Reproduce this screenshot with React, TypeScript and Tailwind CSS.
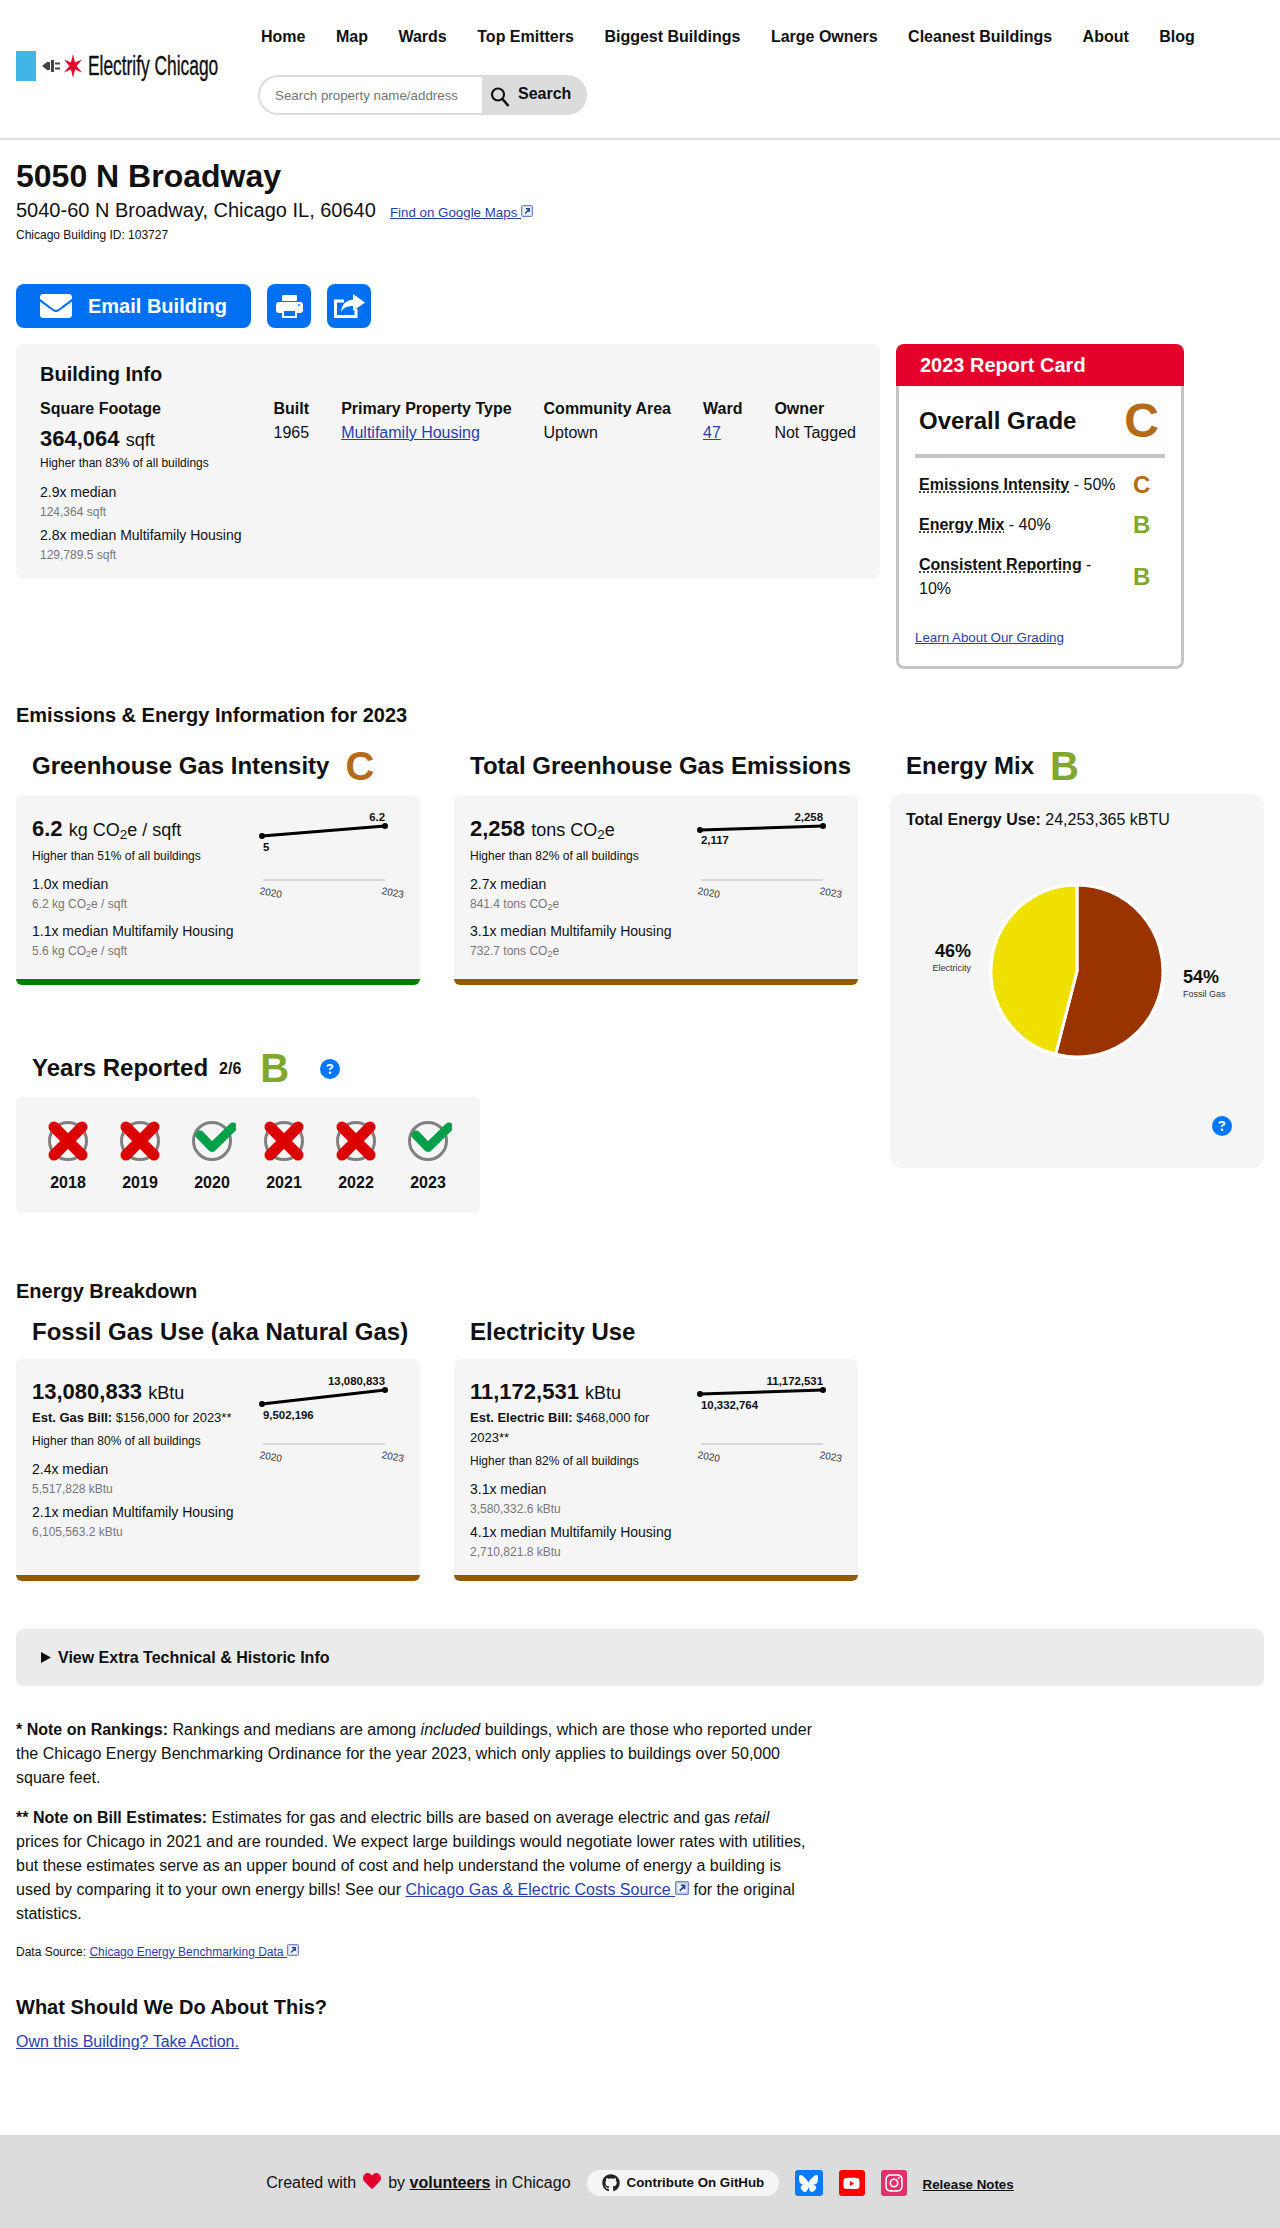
import React from 'react';
import { FaEnvelope, FaGithub, FaYoutube, FaInstagram, FaHeart } from 'react-icons/fa';
import { FaBluesky, FaCircleQuestion } from 'react-icons/fa6';

const navLinks = ['Home', 'Map', 'Wards', 'Top Emitters', 'Biggest Buildings', 'Large Owners', 'Cleanest Buildings', 'About', 'Blog'];

function ExtIcon({ size = 12 }: { size?: number }) {
  return (
    <svg width={size} height={size} viewBox="0 0 12 12" className="inline-block align-baseline">
      <rect x="0.5" y="0.5" width="11" height="11" rx="1" fill="#c9d4f0" stroke="#6f86c9" />
      <rect x="2.5" y="2.5" width="7" height="7" fill="#fff" />
      <path d="M4 8.5 L7.5 5 M5 3.8 H8.2 V7" stroke="#1f3a8a" strokeWidth="1.4" fill="none" />
    </svg>
  );
}

function Logo() {
  return (
    <div className="flex items-center w-[242px] h-[30px]">
      <div className="w-5 h-[30px] bg-[#41b6e6] shrink-0" />
      <svg width="18" height="14" viewBox="0 0 18 14" className="ml-[6px] shrink-0">
        <path d="M0 7 L5 3 H8 V11 H5 Z" fill="#444" />
        <rect x="9" y="1" width="3" height="12" fill="#444" />
        <rect x="13" y="3.5" width="5" height="2" fill="#444" />
        <rect x="13" y="8.5" width="5" height="2" fill="#444" />
      </svg>
      <svg width="18" height="24" viewBox="-9 -12 18 24" className="ml-[4px] shrink-0">
        <path
          d="M0 -12 L2 -3.5 L9 -6.5 L3.6 0 L9 6.5 L2 3.5 L0 12 L-2 3.5 L-9 6.5 L-3.6 0 L-9 -6.5 L-2 -3.5 Z"
          fill="#e4002b"
        />
      </svg>
      <span className="ml-[6px] shrink-0 text-[28px] leading-[30px] whitespace-nowrap text-[#111] origin-left scale-x-[0.62] [-webkit-text-stroke:0.4px_#111]">
        Electrify Chicago
      </span>
    </div>
  );
}

function Header() {
  return (
    <header className="h-[140px] border-b-2 border-[#ddd] flex px-4">
      <div className="mt-[51px]">
        <Logo />
      </div>
      <div>
        <nav className="flex gap-[30.5px] pl-[3px] mt-[25px] h-6 items-center">
          {navLinks.map((link) => (
            <a key={link} className="text-base font-bold text-[#111] whitespace-nowrap">
              {link}
            </a>
          ))}
        </nav>
        <div className="flex h-10 mt-[26px] w-[329px]">
          <input
            placeholder="Search property name/address"
            className="w-[224px] h-10 rounded-l-full border-2 border-r-0 border-[#ddd] pl-[15px] text-[13.33px] placeholder:text-[#757575] bg-white"
          />
          <button className="w-[105px] h-10 rounded-r-full bg-[#dcdcdc] flex items-center pl-2 font-bold text-base text-[#111]">
            <svg width="20" height="22" viewBox="0 0 20 22" className="mt-[3px]">
              <circle cx="8" cy="8.5" r="6" stroke="#111" strokeWidth="2.2" fill="none" />
              <path d="M12.5 13 L18.5 20" stroke="#111" strokeWidth="2.6" />
            </svg>
            <span className="ml-2 -mt-[2px]">Search</span>
          </button>
        </div>
      </div>
    </header>
  );
}

function Dotted({ children }: { children: React.ReactNode }) {
  return <span className="font-bold underline decoration-dotted underline-offset-2">{children}</span>;
}

function ReportCard() {
  return (
    <div className="w-[288px]">
      <div className="h-[42px] bg-[#e4002b] rounded-t-lg pl-6 text-white font-bold text-xl leading-[42px]">2023 Report Card</div>
      <div className="border-[3px] border-t-0 border-[#c4c4c4] rounded-b-lg px-4 pb-[18px]">
        <div className="h-[68px] flex items-center justify-between pl-1 pr-[6px] pt-[2px]">
          <span className="text-2xl font-bold text-[#111]">Overall Grade</span>
          <span className="text-5xl font-bold text-[#b36b17]">C</span>
        </div>
        <div className="h-1 bg-[#c4c4c4]" />
        <div className="mt-[15px] flex items-center pl-1 leading-6">
          <div className="w-[200px]">
            <Dotted>Emissions Intensity</Dotted> - 50%
          </div>
          <div className="ml-[14px] text-2xl leading-6 font-bold text-[#b36b17]">C</div>
        </div>
        <div className="mt-4 flex items-center pl-1 leading-6">
          <div className="w-[200px]">
            <Dotted>Energy Mix</Dotted> - 40%
          </div>
          <div className="ml-[14px] text-2xl leading-6 font-bold text-[#80a82e]">B</div>
        </div>
        <div className="mt-4 flex items-center pl-1 leading-6">
          <div className="w-[200px]">
            <Dotted>Consistent Reporting</Dotted> - 10%
          </div>
          <div className="ml-[14px] text-2xl leading-6 font-bold text-[#80a82e]">B</div>
        </div>
        <a className="block mt-[27px] text-[13.33px] leading-5 text-[#2a3eb1] underline">Learn About Our Grading</a>
      </div>
    </div>
  );
}

function BuildingInfo() {
  return (
    <div className="w-[864px] h-[235px] bg-[#f5f5f5] rounded-lg pl-6 pt-4">
      <h2 className="text-xl font-bold leading-7 text-[#111]">Building Info</h2>
      <div className="flex gap-8 mt-[9px] leading-6">
        <div>
          <div className="font-bold">Square Footage</div>
          <div className="mt-[2px] text-[22px] font-bold leading-8 whitespace-nowrap">
            364,064 <span className="text-lg leading-none font-normal">sqft</span>
          </div>
          <div className="text-xs leading-4">Higher than 83% of all buildings</div>
          <div className="mt-[11px] text-sm leading-5">2.9x median</div>
          <div className="mt-[2px] text-xs leading-4 text-[#777]">124,364 sqft</div>
          <div className="mt-[5px] text-sm leading-5">2.8x median Multifamily Housing</div>
          <div className="mt-[2px] text-xs leading-4 text-[#777]">129,789.5 sqft</div>
        </div>
        <div>
          <div className="font-bold">Built</div>
          <div>1965</div>
        </div>
        <div>
          <div className="font-bold">Primary Property Type</div>
          <a className="text-[#2a3eb1] underline">Multifamily Housing</a>
        </div>
        <div>
          <div className="font-bold">Community Area</div>
          <div>Uptown</div>
        </div>
        <div>
          <div className="font-bold">Ward</div>
          <a className="text-[#2a3eb1] underline">47</a>
        </div>
        <div>
          <div className="font-bold">Owner</div>
          <div>Not Tagged</div>
        </div>
      </div>
    </div>
  );
}

interface SparkProps {
  y1: number;
  y2: number;
  from: string;
  to: string;
  fromY: number;
  axisY: number;
}

function Spark({ y1, y2, from, to, fromY, axisY }: SparkProps) {
  return (
    <svg width="170" height="130" className="ml-1 shrink-0">
      <line x1="16" y1={y1} x2="139" y2={y2} stroke="#000" strokeWidth="3" />
      <circle cx="16" cy={y1} r="3" fill="#000" />
      <circle cx="139" cy={y2} r="3" fill="#000" />
      <text x="139" y={y2 - 5} textAnchor="end" fontSize="11.4" fontWeight="700" fill="#111">
        {to}
      </text>
      <text x="17" y={fromY} fontSize="11.4" fontWeight="700" fill="#111">
        {from}
      </text>
      <line x1="17" y1={axisY} x2="139" y2={axisY} stroke="#ccc" strokeWidth="1.5" />
      <text x="25" y={axisY + 16} textAnchor="middle" fontSize="10" fill="#333" transform={`rotate(10 25 ${axisY + 12})`}>
        2020
      </text>
      <text x="147" y={axisY + 16} textAnchor="middle" fontSize="10" fill="#333" transform={`rotate(10 147 ${axisY + 12})`}>
        2023
      </text>
    </svg>
  );
}

function CO2() {
  return (
    <>
      CO<sub>2</sub>e
    </>
  );
}

function Stat({ big, sub }: { big: string; sub: React.ReactNode }) {
  return (
    <>
      <div className="text-sm leading-5">{big}</div>
      <div className="mt-[2px] text-xs leading-4 text-[#777]">{sub}</div>
    </>
  );
}

function GasCard({ spark, value, unit, pct, stats, barColor }: {
  spark: React.ReactNode;
  value: string;
  unit: React.ReactNode;
  pct: string;
  stats: [string, React.ReactNode, string, React.ReactNode];
  barColor: string;
}) {
  return (
    <div className={`w-[404px] h-[190px] bg-[#f5f5f5] rounded-md border-b-[6px] flex ${barColor}`}>
      <div className="w-[226px] pl-4 pt-[18px] shrink-0">
        <div className="text-[22px] font-bold leading-8 whitespace-nowrap">
          {value} <span className="text-lg leading-none font-normal">{unit}</span>
        </div>
        <div className="mt-[3px] text-xs leading-4 whitespace-nowrap">{pct}</div>
        <div className="mt-[10px] whitespace-nowrap">
          <Stat big={stats[0]} sub={stats[1]} />
        </div>
        <div className="mt-[9px] whitespace-nowrap">
          <Stat big={stats[2]} sub={stats[3]} />
        </div>
      </div>
      {spark}
    </div>
  );
}

function UseCard({ spark, value, bill, pct, stats }: {
  spark: React.ReactNode;
  value: string;
  bill: React.ReactNode;
  pct: string;
  stats: [string, string, string, string];
}) {
  return (
    <div className="w-[404px] h-[222px] bg-[#f5f5f5] rounded-md border-b-[6px] border-[#955a00] flex">
      <div className="w-[226px] pl-4 pt-[17px] shrink-0">
        <div className="text-[22px] font-bold leading-8 whitespace-nowrap">
          {value} <span className="text-lg leading-none font-normal">kBtu</span>
        </div>
        <div className="text-[13px] leading-5 w-[204px]">{bill}</div>
        <div className="mt-[5px] text-xs leading-4 whitespace-nowrap">{pct}</div>
        <div className="mt-[10px] whitespace-nowrap">
          <Stat big={stats[0]} sub={stats[1]} />
        </div>
        <div className="mt-[5px] whitespace-nowrap">
          <Stat big={stats[2]} sub={stats[3]} />
        </div>
      </div>
      {spark}
    </div>
  );
}

function YearMark({ year, ok }: { year: string; ok: boolean }) {
  return (
    <div className="w-[72px] flex flex-col items-center">
      <svg width="48" height="48" viewBox="-24 -24 48 48">
        <circle r="18.5" fill="none" stroke="#808080" strokeWidth="3" />
        {ok ? (
          <path d="M-12 -6 L0 6.5 L21 -14" fill="none" stroke="#00a04a" strokeWidth="9" strokeLinejoin="round" strokeLinecap="round" />
        ) : (
          <path d="M-14 -14 L14 14 M14 -14 L-14 14" fill="none" stroke="#dd0000" strokeWidth="11" strokeLinecap="round" />
        )}
      </svg>
      <div className="mt-[6px] font-bold leading-6">{year}</div>
    </div>
  );
}

function EnergyMix() {
  return (
    <div className="w-[374px]">
      <div className="h-[49px] pb-2 pl-4 flex items-center">
        <h3 className="text-2xl font-bold text-[#111]">Energy Mix</h3>
        <span className="ml-4 text-[40px] font-bold text-[#80a82e]">B</span>
      </div>
      <div className="h-[374px] bg-[#f5f5f5] rounded-xl pt-[14px]">
        <div className="pl-4 leading-6">
          <b>Total Energy Use:</b> 24,253,365 kBTU
        </div>
        <svg width="374" height="280" className="block">
          <g transform="translate(187 139)">
            <circle r="88" fill="#fff" />
            <path d="M0 0 L0 -86 A86 86 0 1 1 -21.4 83.3 Z" fill="#993300" stroke="#fff" strokeWidth="3" />
            <path d="M0 0 L-21.4 83.3 A86 86 0 0 1 0 -86 Z" fill="#f0e000" stroke="#fff" strokeWidth="3" />
          </g>
          <text x="81" y="125" textAnchor="end" fontSize="18" fontWeight="700" fill="#111">46%</text>
          <text x="81" y="139" textAnchor="end" fontSize="9" fill="#333">Electricity</text>
          <text x="293" y="151" fontSize="18" fontWeight="700" fill="#111">54%</text>
          <text x="293" y="165" fontSize="9" fill="#333">Fossil Gas</text>
        </svg>
        <div className="flex justify-end pr-8 mt-1">
          <FaCircleQuestion size={20} color="#0077ff" />
        </div>
      </div>
    </div>
  );
}

function Footer() {
  return (
    <footer className="mt-[81px] h-[94px] bg-[#dcdcdc] flex items-center justify-center gap-4 pt-[2px]">
      <div className="flex items-center whitespace-nowrap">
        Created with <FaHeart size={18} color="#e4002b" className="mx-[7px] -mt-1" /> by{' '}
        <a className="mx-[4.5px] font-bold underline">volunteers</a> in Chicago
      </div>
      <a className="w-[192px] h-[26px] rounded-full bg-[#f5f5f5] flex items-center pl-[15px] text-[13.33px] font-bold text-[#111] whitespace-nowrap">
        <FaGithub size={18} color="#222" />
        <span className="ml-[7px]">Contribute On GitHub</span>
      </a>
      <div className="w-7 h-[26px] rounded-[3px] bg-[#0a7aff] flex items-center justify-center">
        <FaBluesky size={19} color="#fff" />
      </div>
      <div className="w-[26px] h-[26px] rounded-[3px] bg-[#ff0000] flex items-center justify-center">
        <FaYoutube size={17} color="#fff" />
      </div>
      <div className="w-[26px] h-[26px] rounded-[3px] bg-[#e1306c] flex items-center justify-center">
        <FaInstagram size={20} color="#fff" />
      </div>
      <a className="text-[13.33px] font-bold underline text-[#111] whitespace-nowrap mt-1">Release Notes</a>
    </footer>
  );
}

export default function App() {
  return (
    <div className="font-['Liberation_Sans',Arial,sans-serif] text-[#111] bg-white">
      <Header />
      <main className="px-4">
        <h1 className="pt-4 text-[32px] font-bold leading-10">5050 N Broadway</h1>
        <div className="text-xl leading-7 whitespace-nowrap">
          5040-60 N Broadway, Chicago IL, 60640
          <a className="ml-[14px] text-[13.33px] leading-none text-[#2a3eb1] underline">
            Find on Google Maps <ExtIcon />
          </a>
        </div>
        <div className="mt-[3px] text-xs leading-4">Chicago Building ID: 103727</div>

        <div className="mt-[41px] flex gap-4">
          <button className="w-[235px] h-11 rounded-lg bg-[#0070f3] text-white flex items-center pl-6 text-xl font-bold">
            <FaEnvelope size={32} />
            <span className="ml-4">Email Building</span>
          </button>
          <button className="w-11 h-11 rounded-lg bg-[#0070f3] flex items-center justify-center">
            <svg width="27" height="23" viewBox="0 0 27 23">
              <rect x="6" y="0" width="15" height="6" rx="1" fill="#fff" />
              <rect x="0" y="7" width="27" height="11" rx="3" fill="#fff" />
              <rect x="6" y="14" width="15" height="9" fill="#fff" />
              <rect x="8" y="16" width="11" height="5" fill="#0070f3" />
              <circle cx="23" cy="10" r="1" fill="#0070f3" />
            </svg>
          </button>
          <button className="w-11 h-11 rounded-lg bg-[#0070f3] flex items-center justify-center">
            <svg width="31" height="24" viewBox="0 0 31 24">
              <path d="M10 7 H1.5 V22.5 H22 V15" fill="none" stroke="#fff" strokeWidth="3" />
              <path d="M19 0 L31 8.5 L19 17 V12 C13 12 9 14 7 18 C7.5 11 12 6 19 5.5 Z" fill="#fff" />
            </svg>
          </button>
        </div>

        <div className="mt-4 flex gap-4 items-start">
          <BuildingInfo />
          <ReportCard />
        </div>

        <h2 className="mt-8 text-xl font-bold leading-7">Emissions &amp; Energy Information for 2023</h2>

        <div className="mt-4 flex gap-8 items-start">
          <div className="w-[842px]">
            <div className="flex gap-[34px]">
              <div>
                <div className="h-[50px] pb-2 pl-4 flex items-center">
                  <h3 className="text-2xl font-bold">Greenhouse Gas Intensity</h3>
                  <span className="ml-4 text-[40px] font-bold text-[#b36b17]">C</span>
                </div>
                <GasCard
                  barColor="border-[#008000]"
                  value="6.2"
                  unit={<>kg <CO2 /> / sqft</>}
                  pct="Higher than 51% of all buildings"
                  stats={['1.0x median', <>6.2 kg <CO2 /> / sqft</>, '1.1x median Multifamily Housing', <>5.6 kg <CO2 /> / sqft</>]}
                  spark={<Spark y1={41} y2={31} to="6.2" from="5" fromY={56} axisY={85} />}
                />
              </div>
              <div>
                <div className="h-[50px] pb-2 pl-4 flex items-center">
                  <h3 className="text-2xl font-bold">Total Greenhouse Gas Emissions</h3>
                </div>
                <GasCard
                  barColor="border-[#955a00]"
                  value="2,258"
                  unit={<>tons <CO2 /></>}
                  pct="Higher than 82% of all buildings"
                  stats={['2.7x median', <>841.4 tons <CO2 /></>, '3.1x median Multifamily Housing', <>732.7 tons <CO2 /></>]}
                  spark={<Spark y1={35} y2={31} to="2,258" from="2,117" fromY={49} axisY={85} />}
                />
              </div>
            </div>

            <div className="mt-[62px] h-[50px] pb-2 pl-4 flex items-center">
              <h3 className="text-2xl font-bold">Years Reported</h3>
              <span className="ml-[11px] mt-[2px] font-bold">2/6</span>
              <span className="ml-[19px] text-[40px] font-bold text-[#80a82e]">B</span>
              <FaCircleQuestion size={20} color="#0077ff" className="ml-[31px] mt-[2px]" />
            </div>
            <div className="w-[464px] h-[116px] bg-[#f5f5f5] rounded-md px-4 pt-5 flex">
              <YearMark year="2018" ok={false} />
              <YearMark year="2019" ok={false} />
              <YearMark year="2020" ok />
              <YearMark year="2021" ok={false} />
              <YearMark year="2022" ok={false} />
              <YearMark year="2023" ok />
            </div>
          </div>
          <EnergyMix />
        </div>

        <h2 className="mt-16 text-xl font-bold leading-7">Energy Breakdown</h2>
        <div className="mt-1 flex gap-[34px]">
          <div>
            <div className="h-[50px] pb-1 pl-4 flex items-center">
              <h3 className="text-2xl font-bold">Fossil Gas Use (aka Natural Gas)</h3>
            </div>
            <UseCard
              value="13,080,833"
              bill={<><b>Est. Gas Bill:</b> $156,000 for 2023**</>}
              pct="Higher than 80% of all buildings"
              stats={['2.4x median', '5,517,828 kBtu', '2.1x median Multifamily Housing', '6,105,563.2 kBtu']}
              spark={<Spark y1={45} y2={31} to="13,080,833" from="9,502,196" fromY={60} axisY={85} />}
            />
          </div>
          <div>
            <div className="h-[50px] pb-1 pl-4 flex items-center">
              <h3 className="text-2xl font-bold">Electricity Use</h3>
            </div>
            <UseCard
              value="11,172,531"
              bill={<><b>Est. Electric Bill:</b> $468,000 for 2023**</>}
              pct="Higher than 82% of all buildings"
              stats={['3.1x median', '3,580,332.6 kBtu', '4.1x median Multifamily Housing', '2,710,821.8 kBtu']}
              spark={<Spark y1={35} y2={31} to="11,172,531" from="10,332,764" fromY={50} axisY={85} />}
            />
          </div>
        </div>

        <details className="mt-12 h-[57px] bg-[#ebebeb] rounded-lg">
          <summary className="list-none flex items-center h-[57px] pl-[25px] font-bold">
            <svg width="10" height="11" viewBox="0 0 10 11">
              <path d="M0 0 L10 5.5 L0 11 Z" fill="#111" />
            </svg>
            <span className="ml-[7px]">View Extra Technical &amp; Historic Info</span>
          </summary>
        </details>

        <p className="mt-8 w-[800px] leading-6">
          <b>* Note on Rankings:</b> Rankings and medians are among <i>included</i> buildings, which are those who reported under the
          Chicago Energy Benchmarking Ordinance for the year 2023, which only applies to buildings over 50,000 square feet.
        </p>
        <p className="mt-4 w-[800px] leading-6">
          <b>** Note on Bill Estimates:</b> Estimates for gas and electric bills are based on average electric and gas <i>retail</i>{' '}
          prices for Chicago in 2021 and are rounded. We expect large buildings would negotiate lower rates with utilities, but these
          estimates serve as an upper bound of cost and help understand the volume of energy a building is used by comparing it to your
          own energy bills! See our{' '}
          <a className="text-[#2a3eb1] underline">
            Chicago Gas &amp; Electric Costs Source <ExtIcon size={14} />
          </a>{' '}
          for the original statistics.
        </p>
        <p className="mt-[18px] text-xs leading-4">
          Data Source:{' '}
          <a className="text-[#2a3eb1] underline">
            Chicago Energy Benchmarking Data <ExtIcon />
          </a>
        </p>
        <h2 className="mt-[33px] text-xl font-bold leading-7">What Should We Do About This?</h2>
        <a className="block mt-[9px] leading-6 text-[#2a3eb1] underline">Own this Building? Take Action.</a>
      </main>
      <Footer />
    </div>
  );
}
